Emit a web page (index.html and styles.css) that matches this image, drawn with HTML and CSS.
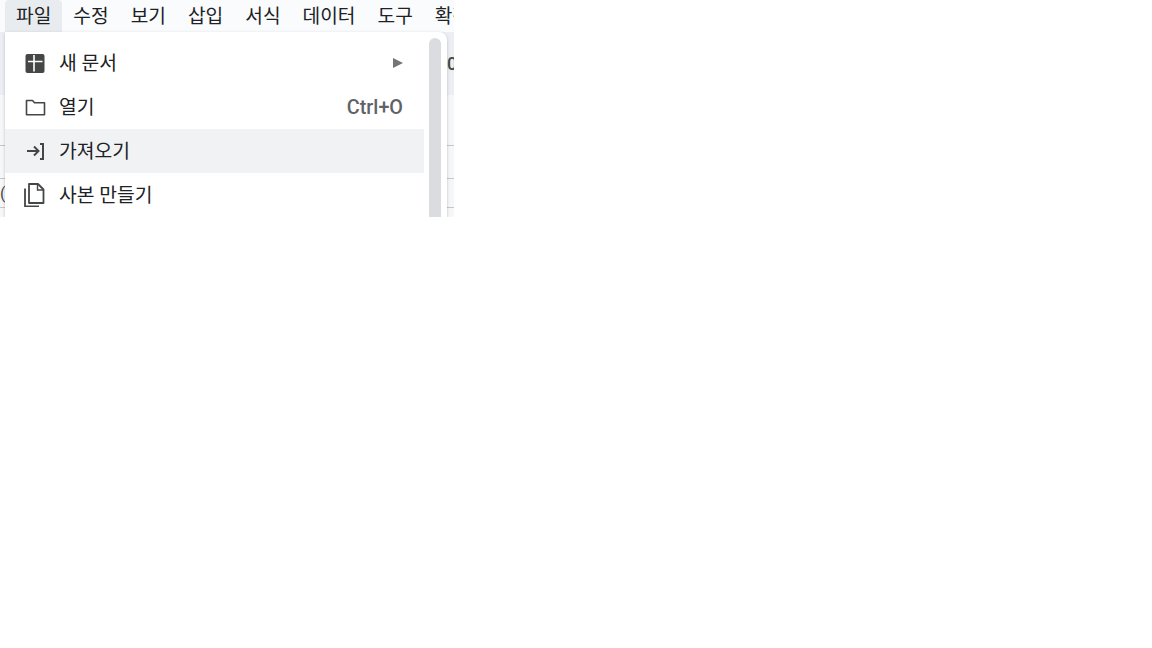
FILE: index.html
```html
<!DOCTYPE html>
<html lang="ko">
<head>
  <meta charset="utf-8">
  <title>파일 메뉴</title>
  <link rel="stylesheet" href="styles.css">
</head>
<body>
  <div class="app">
    <div class="menubar">
      <span class="menubar-item is-open">파일</span>
      <span class="menubar-item">수정</span>
      <span class="menubar-item">보기</span>
      <span class="menubar-item">삽입</span>
      <span class="menubar-item">서식</span>
      <span class="menubar-item">데이터</span>
      <span class="menubar-item">도구</span>
      <span class="menubar-item">확장</span>
    </div>
    <div class="sheet">
      <div class="toolbar-strip"><span class="toolbar-text">0</span></div>
      <div class="grid-row formula-row"></div>
      <div class="grid-row cell-row"></div>
      <div class="grid-row small-row"><span class="grid-text">(</span></div>
    </div>

    <div class="menu">
      <ul class="menu-list">
        <li class="menu-item">
          <svg class="menu-icon" viewBox="0 0 24 24"><rect x="2.500" y="3" width="19" height="19" rx="2" fill="#444746"/><path d="M5 9.700h14.500v1.600H5z M10.200 4h1.600v16.500h-1.600z" fill="#fff"/></svg>
          <span class="menu-label">새 문서</span>
          <span class="menu-arrow"></span>
        </li>
        <li class="menu-item">
          <svg class="menu-icon" viewBox="0 0 24 24"><path d="M3.500 5.500h6l2 2.200h10v12h-18z" fill="none" stroke="#444746" stroke-width="1.600" stroke-linejoin="round"/></svg>
          <span class="menu-label">열기</span>
          <span class="menu-shortcut">Ctrl+O</span>
        </li>
        <li class="menu-item is-hover">
          <svg class="menu-icon" viewBox="0 0 24 24"><path d="M4 12h11M11 7.500l4.500 4.500-4.500 4.500M17 5h3v15h-3" fill="none" stroke="#444746" stroke-width="2"/></svg>
          <span class="menu-label">가져오기</span>
        </li>
        <li class="menu-item">
          <svg class="menu-icon" viewBox="0 0 24 24"><path d="M6 1h9l5.500 5.500V20H6z" fill="none" stroke="#444746" stroke-width="1.800" stroke-linejoin="round"/><path d="M14.500 1v6h6" fill="none" stroke="#444746" stroke-width="1.400"/><path d="M2 5.500V23.300h14" fill="none" stroke="#444746" stroke-width="1.800"/></svg>
          <span class="menu-label">사본 만들기</span>
        </li>
      </ul>
      <div class="scroll-thumb"></div>
    </div>
  </div>
</body>
</html>
```
FILE: styles.css
```css
html, body {
  margin: 0;
  padding: 0;
  background-color: #fff;
}

body {
  font-family: Roboto, "Noto Sans CJK KR", sans-serif;
  color: #202124;
  height: 648px;
  overflow: hidden;
}

.app {
  position: relative;
  width: 454px;
  height: 217px;
  overflow: hidden;
}

.menubar {
  display: flex;
  height: 32px;
  padding-left: 5px;
  background-color: #f9fbfd;
}

.menubar-item {
  flex: none;
  padding: 0 11px;
  height: 32px;
  line-height: 34px;
  font-size: 19.200px;
  border-radius: 4px 4px 0 0;
}

.menubar-item.is-open {
  background-color: #e9ecef;
}

.sheet {
  background-color: #f6f7f8;
  height: 185px;
}

.toolbar-strip {
  height: 63px;
  background-color: #ebeff4;
}

.toolbar-text {
  display: block;
  padding: 22px 0 0 447px;
  font-size: 18px;
  font-weight: 500;
  line-height: 20px;
  color: #444746;
}

.grid-row {
  box-sizing: border-box;
  border-bottom: 1px solid #c7c7c7;
}

.formula-row {
  height: 51px;
}

.cell-row {
  height: 33px;
}

.small-row {
  height: 29px;
  line-height: 30px;
}

.grid-text {
  font-size: 16px;
  color: #444746;
}

.menu {
  position: absolute;
  left: 5px;
  top: 32px;
  width: 442px;
  height: 185px;
  background-color: #fff;
  border-radius: 0 8px 0 0;
  box-shadow: 0 1px 3px rgba(60, 64, 67, 0.3);
}

.menu-list {
  list-style: none;
  margin: 0;
  padding: 9px 0 0 0;
  width: 419px;
}

.menu-item {
  display: flex;
  align-items: center;
  height: 44px;
  padding: 0 21px 0 18px;
  font-size: 19.300px;
  line-height: 42px;
}

.menu-item.is-hover {
  background-color: #f1f2f4;
}

.menu-icon {
  flex: none;
  width: 24px;
  height: 24px;
  margin-right: 12px;
}

.menu-label {
  flex: 1;
  padding-top: 2px;
}

.menu-shortcut {
  padding-top: 2px;
  color: #5f6368;
  font-weight: 500;
  font-size: 19.800px;
}

.menu-arrow {
  width: 0;
  height: 0;
  border-left: 10px solid #757575;
  border-top: 5px solid transparent;
  border-bottom: 5px solid transparent;
}

.scroll-thumb {
  position: absolute;
  left: 424px;
  top: 6px;
  width: 12px;
  height: 179px;
  background-color: #dadce0;
  border-radius: 6px 6px 0 0;
}
```
